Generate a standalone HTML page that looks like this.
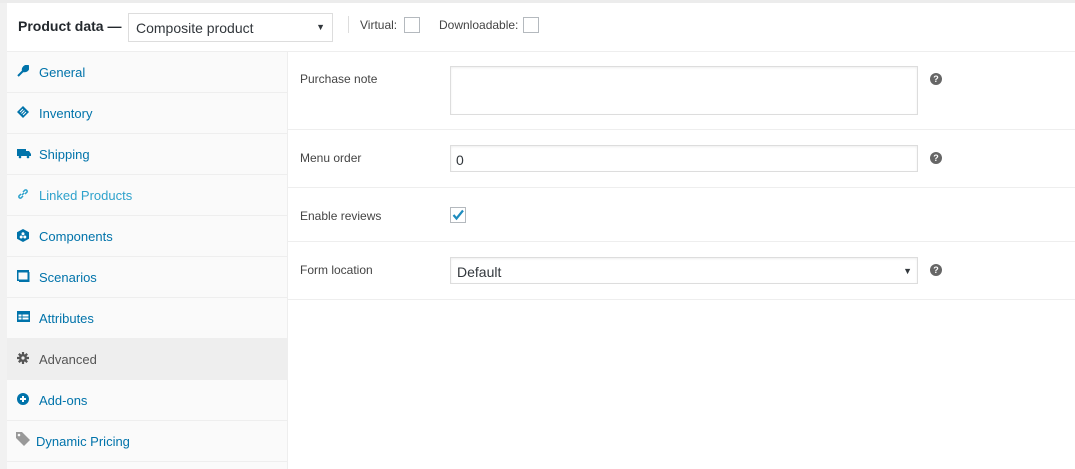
<!DOCTYPE html>
<html><head><style>
*{box-sizing:border-box;margin:0;padding:0}
body{width:1075px;height:469px;overflow:hidden;background:#fff;font-family:"Liberation Sans",sans-serif;position:relative}
.a{position:absolute}
.strip{left:0;top:0;width:7px;height:469px;background:#f1f1f1}
.top{left:0;top:0;width:1075px;height:3px;background:#ececec}
.hdr{left:7px;top:3px;width:1068px;height:49px;background:#fff;border-bottom:1px solid #eee}
.side{left:7px;top:52px;width:281px;height:417px;background:#fafafa;border-right:1px solid #eee}
.tab{position:absolute;left:0;width:280px;height:41px;border-bottom:1px solid #eee;color:#0073aa;font-size:13px}
.tab span{position:absolute;left:32px;top:13px}
.tab svg{position:absolute;left:10px;top:13px}
.lbl{font-size:12px;color:#444;left:300px}
.sep{left:288px;width:787px;height:1px;background:#eee}
.inp{left:450px;width:468px;border:1px solid #ddd;background:#fff;box-shadow:inset 0 1px 2px rgba(0,0,0,.07)}
.help{width:12px;height:12px;border-radius:50%;background:#666;color:#fff;font-size:9px;font-weight:bold;text-align:center;line-height:12px;left:930px}
</style></head><body>
<div class="a strip"></div><div class="a top"></div>
<div class="a hdr">
 <div class="a" style="left:11px;top:15px;font-size:14px;font-weight:bold;color:#23282d">Product data —</div>
 <div class="a" style="left:121px;top:10px;width:205px;height:29px;border:1px solid #ddd;background:#fff;font-size:14px;color:#32373c;padding:6px 7px">Composite product<span style="position:absolute;right:7px;top:8px;font-size:9px">▼</span></div>
 <div class="a" style="left:341px;top:13px;width:1px;height:17px;background:#ddd"></div>
 <div class="a" style="left:353px;top:15px;font-size:12px;color:#444">Virtual:</div>
 <div class="a" style="left:397px;top:14px;width:16px;height:16px;border:1px solid #b4b9be;background:#fff"></div>
 <div class="a" style="left:432px;top:15px;font-size:12px;color:#444">Downloadable:</div>
 <div class="a" style="left:516px;top:14px;width:16px;height:16px;border:1px solid #b4b9be;background:#fff"></div>
</div>
<div class="a side">
 <div class="tab" style="top:0"><svg width="12" height="12" viewBox="0 0 12 12"><path d="M1 11 L6 6 M6 6 C5 3 8 0 11 1 L9 3 L10 4 L11 2 C12 5 9 7 6 6" stroke="#0073aa" stroke-width="2" fill="#0073aa"/></svg><span>General</span></div>
 <div class="tab" style="top:41px"><svg width="12" height="12" viewBox="0 0 12 12"><path d="M6 0 L12 6 L6 12 L0 6Z" fill="#0073aa"/><path d="M3 6 L6 3 M4.5 7.5 L7.5 4.5 M6 9 L9 6" stroke="#fafafa"/></svg><span>Inventory</span></div>
 <div class="tab" style="top:82px"><svg width="14" height="12" viewBox="0 0 14 12"><rect x="0" y="2" width="9" height="7" fill="#0073aa"/><path d="M9 4 H12 L14 7 V9 H9Z" fill="#0073aa"/><circle cx="3" cy="10" r="1.3" fill="#0073aa"/><circle cx="11" cy="10" r="1.3" fill="#0073aa"/></svg><span>Shipping</span></div>
 <div class="tab" style="top:123px;color:#2ea2cc"><svg width="12" height="12" viewBox="0 0 12 12"><path d="M5 7 L7 5 M4 6 L2 8 A1.5 1.5 0 0 0 4 10 L6 8 M6 4 L8 2 A1.5 1.5 0 0 1 10 4 L8 6" stroke="#2ea2cc" stroke-width="1.5" fill="none"/></svg><span>Linked Products</span></div>
 <div class="tab" style="top:164px"><svg width="12" height="13" viewBox="0 0 12 13"><path d="M6 0 L12 3.3 V9.7 L6 13 L0 9.7 V3.3Z" fill="#0073aa"/><circle cx="6" cy="4.8" r="1.5" fill="#fff"/><circle cx="4.2" cy="8" r="1.5" fill="#fff"/><circle cx="7.8" cy="8" r="1.5" fill="#fff"/></svg><span>Components</span></div>
 <div class="tab" style="top:205px"><svg width="13" height="12" viewBox="0 0 13 12"><rect x="0.75" y="0.75" width="10.5" height="9.5" fill="none" stroke="#0073aa" stroke-width="1.5"/><rect x="0" y="0" width="12" height="2.5" fill="#0073aa"/><path d="M12 2 V11.5 H2" stroke="#0073aa" fill="none"/></svg><span>Scenarios</span></div>
 <div class="tab" style="top:246px"><svg width="13" height="11" viewBox="0 0 13 11"><rect width="13" height="11" fill="#0073aa"/><rect x="1.5" y="3.5" width="3" height="2" fill="#fff"/><rect x="1.5" y="6.5" width="3" height="2" fill="#fff"/><rect x="5.5" y="3.5" width="6" height="2" fill="#fff"/><rect x="5.5" y="6.5" width="6" height="2" fill="#fff"/></svg><span>Attributes</span></div>
 <div class="tab" style="top:287px;background:#eee;color:#555"><svg width="12" height="12" viewBox="0 0 12 12"><circle cx="6" cy="6" r="4" fill="#555"/><path d="M6 0 V12 M0 6 H12 M1.8 1.8 L10.2 10.2 M10.2 1.8 L1.8 10.2" stroke="#555" stroke-width="2.2"/><circle cx="6" cy="6" r="1.6" fill="#eee"/></svg><span>Advanced</span></div>
 <div class="tab" style="top:328px"><svg width="12" height="12" viewBox="0 0 12 12"><circle cx="6" cy="6" r="6" fill="#0073aa"/><path d="M6 3 V9 M3 6 H9" stroke="#fff" stroke-width="2"/></svg><span>Add-ons</span></div>
 <div class="tab" style="top:369px"><svg width="16" height="16" viewBox="0 0 16 16" style="left:8px;top:10px"><path d="M1 1 H7 L15 9 L9 15 L1 7Z" fill="#999"/><circle cx="4" cy="4" r="1.3" fill="#fafafa"/></svg><span style="left:29px">Dynamic Pricing</span></div>
</div>
<div class="a lbl" style="top:72px">Purchase note</div>
<div class="a inp" style="top:66px;height:49px"></div>
<div class="a help" style="top:73px">?</div>
<div class="a sep" style="top:129px"></div>
<div class="a lbl" style="top:151px">Menu order</div>
<div class="a inp" style="top:145px;height:27px;font-size:14px;color:#32373c;padding:6px 5px">0</div>
<div class="a help" style="top:152px">?</div>
<div class="a sep" style="top:187px"></div>
<div class="a lbl" style="top:209px">Enable reviews</div>
<div class="a" style="left:450px;top:207px;width:16px;height:16px;border:1px solid #b4b9be;background:#fff"><svg width="14" height="14" viewBox="0 0 14 14"><path d="M2.5 7 L5.5 10.5 L12 2.5" stroke="#1e8cbe" stroke-width="2.2" fill="none"/></svg></div>
<div class="a sep" style="top:241px"></div>
<div class="a lbl" style="top:263px">Form location</div>
<div class="a inp" style="top:257px;height:27px;font-size:14px;color:#32373c;padding:6px 6px">Default<span style="position:absolute;right:5px;top:8px;font-size:9px">▼</span></div>
<div class="a help" style="top:264px">?</div>
<div class="a sep" style="top:299px"></div>
</body></html>
